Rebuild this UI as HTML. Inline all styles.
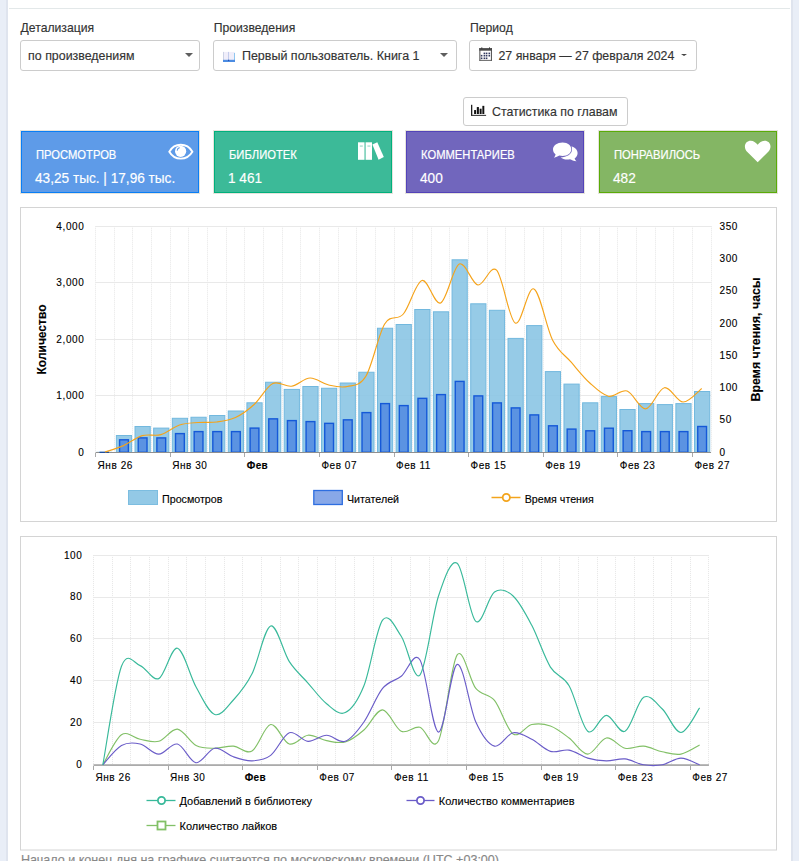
<!DOCTYPE html><html><head><meta charset="utf-8"><title>Статистика</title><style>html,body{margin:0;padding:0;background:#fff;} body{width:799px;height:861px;position:relative;overflow:hidden;font-family:"Liberation Sans", sans-serif;color:#333;-webkit-text-stroke:0.15px #333;} svg text{stroke:#000;stroke-width:0.12px;fill:#000;}.sel{position:absolute;box-sizing:border-box;border:1px solid #cccccc;border-radius:3px;background:#fff;}</style></head><body><div style="position:absolute;left:0;top:0;width:6px;height:861px;background:#e9eef7"></div><div style="position:absolute;left:6px;top:0;width:2px;height:861px;background:#dfe4ee"></div><div style="position:absolute;left:791px;top:0;width:2px;height:861px;background:#dfe4ee"></div><div style="position:absolute;left:793px;top:0;width:6px;height:861px;background:#e9eef7"></div><div style="position:absolute;left:9px;top:8px;width:781px;height:1px;background:#e3e8e9"></div><div style="position:absolute;left:20.6px;top:21.76px;font-size:12.2px;line-height:13.63px;color:#333;-webkit-text-stroke:0.15px #333;font-weight:400;white-space:nowrap;">Детализация</div><div style="position:absolute;left:213.7px;top:21.76px;font-size:12.2px;line-height:13.63px;color:#333;-webkit-text-stroke:0.15px #333;font-weight:400;white-space:nowrap;">Произведения</div><div style="position:absolute;left:470px;top:21.76px;font-size:12.2px;line-height:13.63px;color:#333;-webkit-text-stroke:0.15px #333;font-weight:400;white-space:nowrap;">Период</div><div class="sel" style="left:20px;top:40px;width:180px;height:31px"></div><div style="position:absolute;left:28.1px;top:49.88px;font-size:12.4px;line-height:13.85px;color:#333;-webkit-text-stroke:0.15px #333;font-weight:400;white-space:nowrap;">по произведениям</div><div style="position:absolute;left:184.5px;top:53.4px;width:0;height:0;border-left:4.8px solid transparent;border-right:4.8px solid transparent;border-top:4.2px solid #5e5e5e"></div><div class="sel" style="left:213px;top:40px;width:244px;height:31px"></div><svg width="14" height="12" viewBox="0 0 14 12" style="position:absolute;left:222px;top:51px">
<rect x="1" y="0.9" width="11.6" height="8.2" fill="#f0eefa"/>
<rect x="1" y="0.9" width="0.8" height="8.2" fill="#c3cbe0"/>
<rect x="6.2" y="0.9" width="0.8" height="8.2" fill="#b9c3e8"/>
<rect x="12" y="1.9" width="1" height="8" fill="#8fc6ef"/>
<rect x="1" y="8.8" width="12" height="2.2" fill="#4c8ce2"/>
<rect x="6" y="8.8" width="1.2" height="1.2" fill="#2a4cb0"/>
</svg><div style="position:absolute;left:241.9px;top:49.79px;font-size:12.5px;line-height:13.96px;color:#333;-webkit-text-stroke:0.15px #333;font-weight:400;white-space:nowrap;">Первый пользователь. Книга 1</div><div style="position:absolute;left:440.3px;top:53.4px;width:0;height:0;border-left:4.8px solid transparent;border-right:4.8px solid transparent;border-top:4.2px solid #5e5e5e"></div><div class="sel" style="left:469px;top:40px;width:228px;height:31px"></div><svg width="14" height="15" viewBox="0 0 14 15" style="position:absolute;left:479px;top:47px">
<rect x="0.3" y="1" width="12.7" height="12.7" fill="#fff"/>
<rect x="0.3" y="1" width="1.1" height="12.7" fill="#5a5a5a"/>
<rect x="11.9" y="1" width="1.1" height="12.7" fill="#5a5a5a"/>
<rect x="0.3" y="12.9" width="12.7" height="0.9" fill="#555"/>
<rect x="0.3" y="1.1" width="12.7" height="2.6" fill="#4a4a4a"/>
<rect x="2.3" y="0.4" width="1" height="1.4" fill="#333"/><rect x="10" y="0.4" width="1" height="1.4" fill="#333"/>
<rect x="4.60" y="5.60" width="1.6" height="1.6" fill="#333a60"/>
<rect x="6.80" y="5.60" width="1.6" height="1.6" fill="#333a60"/>
<rect x="9.50" y="5.60" width="1.6" height="1.6" fill="#333a60"/>
<rect x="1.80" y="7.90" width="1.6" height="1.6" fill="#333a60"/>
<rect x="4.60" y="7.90" width="1.6" height="1.6" fill="#333a60"/>
<rect x="6.80" y="7.90" width="1.6" height="1.6" fill="#333a60"/>
<rect x="9.50" y="7.90" width="1.6" height="1.6" fill="#333a60"/>
<rect x="1.80" y="10.50" width="1.6" height="1.6" fill="#333a60"/>
<rect x="4.60" y="10.50" width="1.6" height="1.6" fill="#333a60"/>
<rect x="6.80" y="10.50" width="1.6" height="1.6" fill="#333a60"/>
</svg><div style="position:absolute;left:498.5px;top:49.92px;font-size:12.35px;line-height:13.79px;color:#333;-webkit-text-stroke:0.15px #333;font-weight:400;white-space:nowrap;">27 января — 27 февраля 2024</div><div style="position:absolute;left:681.4px;top:54.2px;width:0;height:0;border-left:3.0px solid transparent;border-right:3.0px solid transparent;border-top:2.6px solid #444"></div><div class="sel" style="left:463px;top:97px;width:165px;height:29px"></div><svg width="17" height="13" viewBox="0 0 17 13" style="position:absolute;left:470px;top:104px">
<rect x="1" y="0.8" width="1.3" height="11.1" fill="#222"/>
<rect x="1" y="10.85" width="15.1" height="1.05" fill="#333"/>
<rect x="4.1" y="6.05" width="1.95" height="3.95" fill="#111"/>
<rect x="6.8" y="3.05" width="2.1" height="6.95" fill="#111"/>
<rect x="9.65" y="4.7" width="1.95" height="5.3" fill="#111"/>
<rect x="12.35" y="1.85" width="1.95" height="8.15" fill="#111"/>
</svg><div style="position:absolute;left:492px;top:106.11px;font-size:12.36px;line-height:13.81px;color:#333;-webkit-text-stroke:0.15px #333;font-weight:400;white-space:nowrap;">Статистика по главам</div><div style="position:absolute;left:21px;top:131px;width:176px;height:60px;background:#5e9be8;border:1px solid #0a7ef5;box-shadow:0 0 0 1px #e5e3dc"></div><div style="position:absolute;left:35.6px;top:148.98px;font-size:12.4px;line-height:13.85px;color:#fff;-webkit-text-stroke:0.15px #fff;font-weight:400;white-space:nowrap;transform:scaleX(0.905);transform-origin:0 0;-webkit-text-stroke:0.2px #fff">ПРОСМОТРОВ</div><div style="position:absolute;left:35.3px;top:171.05px;font-size:14.2px;line-height:15.86px;color:#fff;-webkit-text-stroke:0.15px #fff;font-weight:400;white-space:nowrap;transform:scaleX(0.961);transform-origin:0 0;-webkit-text-stroke:0.15px #fff">43,25 тыс. | 17,96 тыс.</div><svg width="28" height="18" viewBox="0 0 28 18" style="position:absolute;left:166px;top:142px">
<path d="M3.3 9.7 C6 5 9.8 2.8 14.8 2.8 C19.8 2.8 23.6 5 26.4 9.7 C23.6 14.4 19.8 16.6 14.8 16.6 C9.8 16.6 6 14.4 3.3 9.7 Z" fill="none" stroke="#fff" stroke-width="1.9"/>
<circle cx="14.6" cy="9.3" r="5.6" fill="#fff"/>
<path d="M11.2 8.6 C11.3 6.8 12.3 5.9 13.6 5.6" fill="none" stroke="#5c9ae8" stroke-width="1.1"/>
</svg><div style="position:absolute;left:214px;top:131px;width:176px;height:60px;background:#3cba98;border:1px solid #00b07c;box-shadow:0 0 0 1px #e5e3dc"></div><div style="position:absolute;left:228.6px;top:148.98px;font-size:12.4px;line-height:13.85px;color:#fff;-webkit-text-stroke:0.15px #fff;font-weight:400;white-space:nowrap;transform:scaleX(0.905);transform-origin:0 0;-webkit-text-stroke:0.2px #fff">БИБЛИОТЕК</div><div style="position:absolute;left:228.3px;top:171.05px;font-size:14.2px;line-height:15.86px;color:#fff;-webkit-text-stroke:0.15px #fff;font-weight:400;white-space:nowrap;transform:scaleX(0.961);transform-origin:0 0;-webkit-text-stroke:0.15px #fff">1 461</div><svg width="28" height="20" viewBox="0 0 28 20" style="position:absolute;left:356px;top:141px">
<rect x="2" y="1.3" width="6.5" height="17.5" fill="#fff"/>
<rect x="9.6" y="1.3" width="6.4" height="17.5" fill="#fff"/>
<path d="M16.4 3.6 L21.3 1.3 L27.8 15.9 L22.6 18.8 Z" fill="#fff"/>
<rect x="3.8" y="4.6" width="3" height="0.9" fill="#7fd0b8"/>
<rect x="11.4" y="4.6" width="3" height="0.9" fill="#7fd0b8"/>
</svg><div style="position:absolute;left:406px;top:131px;width:176px;height:60px;background:#7166bd;border:1px solid #5343b8;box-shadow:0 0 0 1px #e5e3dc"></div><div style="position:absolute;left:420.6px;top:148.98px;font-size:12.4px;line-height:13.85px;color:#fff;-webkit-text-stroke:0.15px #fff;font-weight:400;white-space:nowrap;transform:scaleX(0.905);transform-origin:0 0;-webkit-text-stroke:0.2px #fff">КОММЕНТАРИЕВ</div><div style="position:absolute;left:420.3px;top:171.05px;font-size:14.2px;line-height:15.86px;color:#fff;-webkit-text-stroke:0.15px #fff;font-weight:400;white-space:nowrap;transform:scaleX(0.961);transform-origin:0 0;-webkit-text-stroke:0.15px #fff">400</div><svg width="28" height="22" viewBox="0 0 28 22" style="position:absolute;left:551px;top:141px">
<path d="M20.5 5.2 C24.5 6.4 26.6 9 26.6 12 C26.6 14.4 25.2 16.3 23.6 17.4 C23.9 18.6 24.7 19.4 25.6 20.3 C22.8 20.1 20.5 19.1 19 18.3 C18 18.5 17.3 18.6 16.2 18.6 C13.6 18.6 11.3 17.8 9.6 16.5 C15.6 16.3 21 13.5 21 8.6 C21 7.4 20.8 6.2 20.5 5.2 Z" fill="#fff"/>
<path d="M11.6 1.6 C17 1.6 20.3 4.8 20.3 8.3 C20.3 11.8 17 15 11.6 15 C10.5 15 9.4 14.8 8.4 14.5 C6.8 15.6 5 16.3 2.9 16.8 C3.7 15.8 4.3 14.8 4.6 13.4 C2.9 12.2 2 10.4 2 8.3 C2 4.8 6.2 1.6 11.6 1.6 Z" fill="#fff"/>
</svg><div style="position:absolute;left:599px;top:131px;width:176px;height:60px;background:#84b664;border:1px solid #5aab08;box-shadow:0 0 0 1px #e5e3dc"></div><div style="position:absolute;left:613.6px;top:148.98px;font-size:12.4px;line-height:13.85px;color:#fff;-webkit-text-stroke:0.15px #fff;font-weight:400;white-space:nowrap;transform:scaleX(0.905);transform-origin:0 0;-webkit-text-stroke:0.2px #fff">ПОНРАВИЛОСЬ</div><div style="position:absolute;left:613.3px;top:171.05px;font-size:14.2px;line-height:15.86px;color:#fff;-webkit-text-stroke:0.15px #fff;font-weight:400;white-space:nowrap;transform:scaleX(0.961);transform-origin:0 0;-webkit-text-stroke:0.15px #fff">482</div><svg width="29.4" height="25.2" viewBox="0 0 28 24" style="position:absolute;left:743.3px;top:138.6px">
<path d="M14 22.2 L4.4 12.7 C2.6 10.9 1.8 9.2 1.8 7.1 C1.8 3.8 4.2 1.6 7.4 1.6 C9.9 1.6 12.3 3.3 14 5.4 C15.7 3.3 18.1 1.6 20.6 1.6 C23.8 1.6 26.2 3.8 26.2 7.1 C26.2 9.2 25.4 10.9 23.6 12.7 Z" fill="#fff"/>
</svg><svg width="799" height="861" style="position:absolute;left:0;top:0" font-family='"Liberation Sans", sans-serif'><rect x="20.5" y="207.5" width="756" height="314" fill="none" stroke="#d4d4d4" stroke-width="1"/><line x1="95.5" y1="226.3" x2="95.5" y2="452.3" stroke="#e6e6e6" stroke-width="1" stroke-dasharray="1 1"/><line x1="114.5" y1="226.3" x2="114.5" y2="452.3" stroke="#e6e6e6" stroke-width="1" stroke-dasharray="1 1"/><line x1="132.5" y1="226.3" x2="132.5" y2="452.3" stroke="#e6e6e6" stroke-width="1" stroke-dasharray="1 1"/><line x1="151.5" y1="226.3" x2="151.5" y2="452.3" stroke="#e6e6e6" stroke-width="1" stroke-dasharray="1 1"/><line x1="170.5" y1="226.3" x2="170.5" y2="452.3" stroke="#e6e6e6" stroke-width="1" stroke-dasharray="1 1"/><line x1="188.5" y1="226.3" x2="188.5" y2="452.3" stroke="#e6e6e6" stroke-width="1" stroke-dasharray="1 1"/><line x1="207.5" y1="226.3" x2="207.5" y2="452.3" stroke="#e6e6e6" stroke-width="1" stroke-dasharray="1 1"/><line x1="226.5" y1="226.3" x2="226.5" y2="452.3" stroke="#e6e6e6" stroke-width="1" stroke-dasharray="1 1"/><line x1="244.5" y1="226.3" x2="244.5" y2="452.3" stroke="#e6e6e6" stroke-width="1" stroke-dasharray="1 1"/><line x1="263.5" y1="226.3" x2="263.5" y2="452.3" stroke="#e6e6e6" stroke-width="1" stroke-dasharray="1 1"/><line x1="282.5" y1="226.3" x2="282.5" y2="452.3" stroke="#e6e6e6" stroke-width="1" stroke-dasharray="1 1"/><line x1="300.5" y1="226.3" x2="300.5" y2="452.3" stroke="#e6e6e6" stroke-width="1" stroke-dasharray="1 1"/><line x1="319.5" y1="226.3" x2="319.5" y2="452.3" stroke="#e6e6e6" stroke-width="1" stroke-dasharray="1 1"/><line x1="338.5" y1="226.3" x2="338.5" y2="452.3" stroke="#e6e6e6" stroke-width="1" stroke-dasharray="1 1"/><line x1="356.5" y1="226.3" x2="356.5" y2="452.3" stroke="#e6e6e6" stroke-width="1" stroke-dasharray="1 1"/><line x1="375.5" y1="226.3" x2="375.5" y2="452.3" stroke="#e6e6e6" stroke-width="1" stroke-dasharray="1 1"/><line x1="394.5" y1="226.3" x2="394.5" y2="452.3" stroke="#e6e6e6" stroke-width="1" stroke-dasharray="1 1"/><line x1="412.5" y1="226.3" x2="412.5" y2="452.3" stroke="#e6e6e6" stroke-width="1" stroke-dasharray="1 1"/><line x1="431.5" y1="226.3" x2="431.5" y2="452.3" stroke="#e6e6e6" stroke-width="1" stroke-dasharray="1 1"/><line x1="449.5" y1="226.3" x2="449.5" y2="452.3" stroke="#e6e6e6" stroke-width="1" stroke-dasharray="1 1"/><line x1="468.5" y1="226.3" x2="468.5" y2="452.3" stroke="#e6e6e6" stroke-width="1" stroke-dasharray="1 1"/><line x1="487.5" y1="226.3" x2="487.5" y2="452.3" stroke="#e6e6e6" stroke-width="1" stroke-dasharray="1 1"/><line x1="505.5" y1="226.3" x2="505.5" y2="452.3" stroke="#e6e6e6" stroke-width="1" stroke-dasharray="1 1"/><line x1="524.5" y1="226.3" x2="524.5" y2="452.3" stroke="#e6e6e6" stroke-width="1" stroke-dasharray="1 1"/><line x1="543.5" y1="226.3" x2="543.5" y2="452.3" stroke="#e6e6e6" stroke-width="1" stroke-dasharray="1 1"/><line x1="561.5" y1="226.3" x2="561.5" y2="452.3" stroke="#e6e6e6" stroke-width="1" stroke-dasharray="1 1"/><line x1="580.5" y1="226.3" x2="580.5" y2="452.3" stroke="#e6e6e6" stroke-width="1" stroke-dasharray="1 1"/><line x1="599.5" y1="226.3" x2="599.5" y2="452.3" stroke="#e6e6e6" stroke-width="1" stroke-dasharray="1 1"/><line x1="617.5" y1="226.3" x2="617.5" y2="452.3" stroke="#e6e6e6" stroke-width="1" stroke-dasharray="1 1"/><line x1="636.5" y1="226.3" x2="636.5" y2="452.3" stroke="#e6e6e6" stroke-width="1" stroke-dasharray="1 1"/><line x1="655.5" y1="226.3" x2="655.5" y2="452.3" stroke="#e6e6e6" stroke-width="1" stroke-dasharray="1 1"/><line x1="673.5" y1="226.3" x2="673.5" y2="452.3" stroke="#e6e6e6" stroke-width="1" stroke-dasharray="1 1"/><line x1="692.5" y1="226.3" x2="692.5" y2="452.3" stroke="#e6e6e6" stroke-width="1" stroke-dasharray="1 1"/><line x1="711.5" y1="226.3" x2="711.5" y2="452.3" stroke="#e6e6e6" stroke-width="1" stroke-dasharray="1 1"/><line x1="95.6" y1="452.5" x2="711.05" y2="452.5" stroke="#e9e9e9" stroke-width="1"/><line x1="95.6" y1="395.5" x2="711.05" y2="395.5" stroke="#e9e9e9" stroke-width="1"/><line x1="95.6" y1="339.5" x2="711.05" y2="339.5" stroke="#e9e9e9" stroke-width="1"/><line x1="95.6" y1="282.5" x2="711.05" y2="282.5" stroke="#e9e9e9" stroke-width="1"/><line x1="95.6" y1="226.5" x2="711.05" y2="226.5" stroke="#e9e9e9" stroke-width="1"/><rect x="96.5" y="451.6" width="15.5" height="1.4" fill="#b9dcef"/><rect x="116.38" y="435.5" width="15.2" height="16.8" fill="#8bc5e4" fill-opacity="0.9" stroke="#72b8de" stroke-width="1"/><rect x="119.58" y="439.8" width="8.8" height="12.5" fill="#5b93e2" stroke="#1559d8" stroke-width="1.4"/><rect x="135.02" y="426.5" width="15.2" height="25.8" fill="#8bc5e4" fill-opacity="0.9" stroke="#72b8de" stroke-width="1"/><rect x="138.22" y="437.9" width="8.8" height="14.4" fill="#5b93e2" stroke="#1559d8" stroke-width="1.4"/><rect x="153.67" y="428.1" width="15.2" height="24.2" fill="#8bc5e4" fill-opacity="0.9" stroke="#72b8de" stroke-width="1"/><rect x="156.87" y="437.9" width="8.8" height="14.4" fill="#5b93e2" stroke="#1559d8" stroke-width="1.4"/><rect x="172.32" y="418.3" width="15.2" height="34" fill="#8bc5e4" fill-opacity="0.9" stroke="#72b8de" stroke-width="1"/><rect x="175.52" y="433.6" width="8.8" height="18.7" fill="#5b93e2" stroke="#1559d8" stroke-width="1.4"/><rect x="190.97" y="417.25" width="15.2" height="35.05" fill="#8bc5e4" fill-opacity="0.9" stroke="#72b8de" stroke-width="1"/><rect x="194.17" y="431.6" width="8.8" height="20.7" fill="#5b93e2" stroke="#1559d8" stroke-width="1.4"/><rect x="209.62" y="415.5" width="15.2" height="36.8" fill="#8bc5e4" fill-opacity="0.9" stroke="#72b8de" stroke-width="1"/><rect x="212.82" y="431.6" width="8.8" height="20.7" fill="#5b93e2" stroke="#1559d8" stroke-width="1.4"/><rect x="228.27" y="411" width="15.2" height="41.3" fill="#8bc5e4" fill-opacity="0.9" stroke="#72b8de" stroke-width="1"/><rect x="231.47" y="431.6" width="8.8" height="20.7" fill="#5b93e2" stroke="#1559d8" stroke-width="1.4"/><rect x="246.92" y="402.8" width="15.2" height="49.5" fill="#8bc5e4" fill-opacity="0.9" stroke="#72b8de" stroke-width="1"/><rect x="250.12" y="428.1" width="8.8" height="24.2" fill="#5b93e2" stroke="#1559d8" stroke-width="1.4"/><rect x="265.57" y="382.25" width="15.2" height="70.05" fill="#8bc5e4" fill-opacity="0.9" stroke="#72b8de" stroke-width="1"/><rect x="268.77" y="418.85" width="8.8" height="33.45" fill="#5b93e2" stroke="#1559d8" stroke-width="1.4"/><rect x="284.22" y="389.4" width="15.2" height="62.9" fill="#8bc5e4" fill-opacity="0.9" stroke="#72b8de" stroke-width="1"/><rect x="287.43" y="420.6" width="8.8" height="31.7" fill="#5b93e2" stroke="#1559d8" stroke-width="1.4"/><rect x="302.87" y="386.5" width="15.2" height="65.8" fill="#8bc5e4" fill-opacity="0.9" stroke="#72b8de" stroke-width="1"/><rect x="306.07" y="421.6" width="8.8" height="30.7" fill="#5b93e2" stroke="#1559d8" stroke-width="1.4"/><rect x="321.52" y="388.25" width="15.2" height="64.05" fill="#8bc5e4" fill-opacity="0.9" stroke="#72b8de" stroke-width="1"/><rect x="324.72" y="423.35" width="8.8" height="28.95" fill="#5b93e2" stroke="#1559d8" stroke-width="1.4"/><rect x="340.17" y="383" width="15.2" height="69.3" fill="#8bc5e4" fill-opacity="0.9" stroke="#72b8de" stroke-width="1"/><rect x="343.37" y="419.85" width="8.8" height="32.45" fill="#5b93e2" stroke="#1559d8" stroke-width="1.4"/><rect x="358.82" y="372.25" width="15.2" height="80.05" fill="#8bc5e4" fill-opacity="0.9" stroke="#72b8de" stroke-width="1"/><rect x="362.02" y="412.6" width="8.8" height="39.7" fill="#5b93e2" stroke="#1559d8" stroke-width="1.4"/><rect x="377.47" y="328.25" width="15.2" height="124.05" fill="#8bc5e4" fill-opacity="0.9" stroke="#72b8de" stroke-width="1"/><rect x="380.68" y="403.6" width="8.8" height="48.7" fill="#5b93e2" stroke="#1559d8" stroke-width="1.4"/><rect x="396.12" y="324.5" width="15.2" height="127.8" fill="#8bc5e4" fill-opacity="0.9" stroke="#72b8de" stroke-width="1"/><rect x="399.32" y="405.6" width="8.8" height="46.7" fill="#5b93e2" stroke="#1559d8" stroke-width="1.4"/><rect x="414.77" y="309.5" width="15.2" height="142.8" fill="#8bc5e4" fill-opacity="0.9" stroke="#72b8de" stroke-width="1"/><rect x="417.97" y="398.35" width="8.8" height="53.95" fill="#5b93e2" stroke="#1559d8" stroke-width="1.4"/><rect x="433.42" y="311.8" width="15.2" height="140.5" fill="#8bc5e4" fill-opacity="0.9" stroke="#72b8de" stroke-width="1"/><rect x="436.62" y="394.6" width="8.8" height="57.7" fill="#5b93e2" stroke="#1559d8" stroke-width="1.4"/><rect x="452.07" y="259.8" width="15.2" height="192.5" fill="#8bc5e4" fill-opacity="0.9" stroke="#72b8de" stroke-width="1"/><rect x="455.27" y="381.4" width="8.8" height="70.9" fill="#5b93e2" stroke="#1559d8" stroke-width="1.4"/><rect x="470.72" y="303.8" width="15.2" height="148.5" fill="#8bc5e4" fill-opacity="0.9" stroke="#72b8de" stroke-width="1"/><rect x="473.93" y="395.9" width="8.8" height="56.4" fill="#5b93e2" stroke="#1559d8" stroke-width="1.4"/><rect x="489.37" y="310.3" width="15.2" height="142" fill="#8bc5e4" fill-opacity="0.9" stroke="#72b8de" stroke-width="1"/><rect x="492.57" y="402.9" width="8.8" height="49.4" fill="#5b93e2" stroke="#1559d8" stroke-width="1.4"/><rect x="508.02" y="338.4" width="15.2" height="113.9" fill="#8bc5e4" fill-opacity="0.9" stroke="#72b8de" stroke-width="1"/><rect x="511.23" y="407.9" width="8.8" height="44.4" fill="#5b93e2" stroke="#1559d8" stroke-width="1.4"/><rect x="526.67" y="325.6" width="15.2" height="126.7" fill="#8bc5e4" fill-opacity="0.9" stroke="#72b8de" stroke-width="1"/><rect x="529.88" y="414.9" width="8.8" height="37.4" fill="#5b93e2" stroke="#1559d8" stroke-width="1.4"/><rect x="545.32" y="371.6" width="15.2" height="80.7" fill="#8bc5e4" fill-opacity="0.9" stroke="#72b8de" stroke-width="1"/><rect x="548.52" y="425.8" width="8.8" height="26.5" fill="#5b93e2" stroke="#1559d8" stroke-width="1.4"/><rect x="563.97" y="384.1" width="15.2" height="68.2" fill="#8bc5e4" fill-opacity="0.9" stroke="#72b8de" stroke-width="1"/><rect x="567.17" y="429.1" width="8.8" height="23.2" fill="#5b93e2" stroke="#1559d8" stroke-width="1.4"/><rect x="582.62" y="402.8" width="15.2" height="49.5" fill="#8bc5e4" fill-opacity="0.9" stroke="#72b8de" stroke-width="1"/><rect x="585.83" y="430.8" width="8.8" height="21.5" fill="#5b93e2" stroke="#1559d8" stroke-width="1.4"/><rect x="601.27" y="396.6" width="15.2" height="55.7" fill="#8bc5e4" fill-opacity="0.9" stroke="#72b8de" stroke-width="1"/><rect x="604.48" y="428.2" width="8.8" height="24.1" fill="#5b93e2" stroke="#1559d8" stroke-width="1.4"/><rect x="619.92" y="409.5" width="15.2" height="42.8" fill="#8bc5e4" fill-opacity="0.9" stroke="#72b8de" stroke-width="1"/><rect x="623.12" y="430.7" width="8.8" height="21.6" fill="#5b93e2" stroke="#1559d8" stroke-width="1.4"/><rect x="638.57" y="403.6" width="15.2" height="48.7" fill="#8bc5e4" fill-opacity="0.9" stroke="#72b8de" stroke-width="1"/><rect x="641.77" y="431.6" width="8.8" height="20.7" fill="#5b93e2" stroke="#1559d8" stroke-width="1.4"/><rect x="657.23" y="404.6" width="15.2" height="47.7" fill="#8bc5e4" fill-opacity="0.9" stroke="#72b8de" stroke-width="1"/><rect x="660.43" y="431.6" width="8.8" height="20.7" fill="#5b93e2" stroke="#1559d8" stroke-width="1.4"/><rect x="675.88" y="403.6" width="15.2" height="48.7" fill="#8bc5e4" fill-opacity="0.9" stroke="#72b8de" stroke-width="1"/><rect x="679.08" y="431.6" width="8.8" height="20.7" fill="#5b93e2" stroke="#1559d8" stroke-width="1.4"/><rect x="694.52" y="391.5" width="15.2" height="60.8" fill="#8bc5e4" fill-opacity="0.9" stroke="#72b8de" stroke-width="1"/><rect x="697.73" y="426.5" width="8.8" height="25.8" fill="#5b93e2" stroke="#1559d8" stroke-width="1.4"/><line x1="95.6" y1="452.5" x2="711.05" y2="452.5" stroke="#8f8f8f" stroke-width="1.2"/><line x1="95.5" y1="453" x2="95.5" y2="457" stroke="#aaaaaa" stroke-width="1"/><line x1="170.5" y1="453" x2="170.5" y2="457" stroke="#aaaaaa" stroke-width="1"/><line x1="244.5" y1="453" x2="244.5" y2="457" stroke="#aaaaaa" stroke-width="1"/><line x1="319.5" y1="453" x2="319.5" y2="457" stroke="#aaaaaa" stroke-width="1"/><line x1="394.5" y1="453" x2="394.5" y2="457" stroke="#aaaaaa" stroke-width="1"/><line x1="468.5" y1="453" x2="468.5" y2="457" stroke="#aaaaaa" stroke-width="1"/><line x1="543.5" y1="453" x2="543.5" y2="457" stroke="#aaaaaa" stroke-width="1"/><line x1="617.5" y1="453" x2="617.5" y2="457" stroke="#aaaaaa" stroke-width="1"/><line x1="692.5" y1="453" x2="692.5" y2="457" stroke="#aaaaaa" stroke-width="1"/><rect x="99.5" y="451.7" width="9.5" height="1.3" fill="#1f4f9e"/><path d="M104.92 452 C108.03 450.93 117.36 448.33 123.57 445.6 C129.79 442.87 136.01 437.43 142.22 435.6 C148.44 433.77 154.66 436.37 160.88 434.6 C167.09 432.83 173.31 427.02 179.52 425 C185.74 422.98 191.96 423 198.17 422.5 C204.39 422 210.61 422.83 216.82 422 C223.04 421.17 229.26 420.42 235.47 417.5 C241.69 414.58 247.91 410.17 254.12 404.5 C260.34 398.83 266.56 386.55 272.77 383.5 C278.99 380.45 285.21 387.12 291.42 386.2 C297.64 385.28 303.86 378.2 310.07 378 C316.29 377.8 322.51 383.58 328.72 385 C334.94 386.42 341.16 388 347.38 386.5 C353.59 385 359.81 386.42 366.02 376 C372.24 365.58 378.46 334.33 384.67 324 C390.89 313.67 397.11 321.25 403.32 314 C409.54 306.75 415.76 282.33 421.98 280.5 C428.19 278.67 434.41 305.75 440.62 303 C446.84 300.25 453.06 267 459.27 264 C465.49 261 471.71 283.97 477.92 285 C484.14 286.03 490.36 263.85 496.57 270.2 C502.79 276.55 509.01 319.98 515.22 323.1 C521.44 326.22 527.66 286.1 533.88 288.9 C540.09 291.7 546.31 327.68 552.52 339.9 C558.74 352.12 564.96 355.02 571.17 362.2 C577.39 369.38 583.61 377.33 589.82 383 C596.04 388.67 602.26 394.87 608.48 396.2 C614.69 397.53 620.91 388.9 627.12 391 C633.34 393.1 639.56 409.35 645.77 408.8 C651.99 408.25 658.21 388.83 664.42 387.7 C670.64 386.57 676.86 401.87 683.07 402 C689.29 402.13 698.62 390.75 701.73 388.5" fill="none" stroke="#f5a31a" stroke-width="1.15"/><text x="84.4" y="455.7" font-size="10" letter-spacing="0.6" text-anchor="end">0</text><text x="84.4" y="399.2" font-size="10" letter-spacing="0.6" text-anchor="end">1,000</text><text x="84.4" y="342.7" font-size="10" letter-spacing="0.6" text-anchor="end">2,000</text><text x="84.4" y="286.2" font-size="10" letter-spacing="0.6" text-anchor="end">3,000</text><text x="84.4" y="229.7" font-size="10" letter-spacing="0.6" text-anchor="end">4,000</text><text x="719.5" y="455.7" font-size="10" letter-spacing="0.6">0</text><text x="719.5" y="423.41" font-size="10" letter-spacing="0.6">50</text><text x="719.5" y="391.13" font-size="10" letter-spacing="0.6">100</text><text x="719.5" y="358.84" font-size="10" letter-spacing="0.6">150</text><text x="719.5" y="326.56" font-size="10" letter-spacing="0.6">200</text><text x="719.5" y="294.27" font-size="10" letter-spacing="0.6">250</text><text x="719.5" y="261.99" font-size="10" letter-spacing="0.6">300</text><text x="719.5" y="229.7" font-size="10" letter-spacing="0.6">350</text><text x="97.6" y="468.9" font-size="10" letter-spacing="0.55" >Янв 26</text><text x="172.2" y="468.9" font-size="10" letter-spacing="0.55" >Янв 30</text><text x="246.8" y="468.9" font-size="10" letter-spacing="0.3" font-weight="700">Фев</text><text x="321.4" y="468.9" font-size="10" letter-spacing="0.55" >Фев 07</text><text x="396" y="468.9" font-size="10" letter-spacing="0.55" >Фев 11</text><text x="470.6" y="468.9" font-size="10" letter-spacing="0.55" >Фев 15</text><text x="545.2" y="468.9" font-size="10" letter-spacing="0.55" >Фев 19</text><text x="619.8" y="468.9" font-size="10" letter-spacing="0.55" >Фев 23</text><text x="694.4" y="468.9" font-size="10" letter-spacing="0.55" >Фев 27</text><text transform="translate(45.6 339.5) rotate(-90)" font-size="12" font-weight="700" text-anchor="middle">Количество</text><text transform="translate(760.2 339.5) rotate(-90)" font-size="12.4" font-weight="700" text-anchor="middle">Время чтения, часы</text><rect x="128.5" y="490.5" width="29" height="14" fill="#93c9e6" stroke="#7cbde0"/><text x="162" y="503" font-size="10.7">Просмотров</text><rect x="313.8" y="490.5" width="28.5" height="14" fill="#88a8e8" stroke="#2e6ee0" stroke-width="1.3"/><text x="347" y="503" font-size="10.7">Читателей</text><line x1="491.5" y1="497.5" x2="520.5" y2="497.5" stroke="#f3a41c" stroke-width="1.5"/><circle cx="506.3" cy="497.5" r="3.6" fill="#fff" stroke="#f3a41c" stroke-width="1.8"/><text x="524.7" y="503" font-size="10.7">Время чтения</text><rect x="20.5" y="536.5" width="756" height="313.5" fill="none" stroke="#d4d4d4" stroke-width="1"/><line x1="93.5" y1="555.1" x2="93.5" y2="764.8" stroke="#e6e6e6" stroke-width="1" stroke-dasharray="1 1"/><line x1="112.5" y1="555.1" x2="112.5" y2="764.8" stroke="#e6e6e6" stroke-width="1" stroke-dasharray="1 1"/><line x1="130.5" y1="555.1" x2="130.5" y2="764.8" stroke="#e6e6e6" stroke-width="1" stroke-dasharray="1 1"/><line x1="149.5" y1="555.1" x2="149.5" y2="764.8" stroke="#e6e6e6" stroke-width="1" stroke-dasharray="1 1"/><line x1="168.5" y1="555.1" x2="168.5" y2="764.8" stroke="#e6e6e6" stroke-width="1" stroke-dasharray="1 1"/><line x1="186.5" y1="555.1" x2="186.5" y2="764.8" stroke="#e6e6e6" stroke-width="1" stroke-dasharray="1 1"/><line x1="205.5" y1="555.1" x2="205.5" y2="764.8" stroke="#e6e6e6" stroke-width="1" stroke-dasharray="1 1"/><line x1="224.5" y1="555.1" x2="224.5" y2="764.8" stroke="#e6e6e6" stroke-width="1" stroke-dasharray="1 1"/><line x1="242.5" y1="555.1" x2="242.5" y2="764.8" stroke="#e6e6e6" stroke-width="1" stroke-dasharray="1 1"/><line x1="261.5" y1="555.1" x2="261.5" y2="764.8" stroke="#e6e6e6" stroke-width="1" stroke-dasharray="1 1"/><line x1="280.5" y1="555.1" x2="280.5" y2="764.8" stroke="#e6e6e6" stroke-width="1" stroke-dasharray="1 1"/><line x1="298.5" y1="555.1" x2="298.5" y2="764.8" stroke="#e6e6e6" stroke-width="1" stroke-dasharray="1 1"/><line x1="317.5" y1="555.1" x2="317.5" y2="764.8" stroke="#e6e6e6" stroke-width="1" stroke-dasharray="1 1"/><line x1="335.5" y1="555.1" x2="335.5" y2="764.8" stroke="#e6e6e6" stroke-width="1" stroke-dasharray="1 1"/><line x1="354.5" y1="555.1" x2="354.5" y2="764.8" stroke="#e6e6e6" stroke-width="1" stroke-dasharray="1 1"/><line x1="373.5" y1="555.1" x2="373.5" y2="764.8" stroke="#e6e6e6" stroke-width="1" stroke-dasharray="1 1"/><line x1="391.5" y1="555.1" x2="391.5" y2="764.8" stroke="#e6e6e6" stroke-width="1" stroke-dasharray="1 1"/><line x1="410.5" y1="555.1" x2="410.5" y2="764.8" stroke="#e6e6e6" stroke-width="1" stroke-dasharray="1 1"/><line x1="429.5" y1="555.1" x2="429.5" y2="764.8" stroke="#e6e6e6" stroke-width="1" stroke-dasharray="1 1"/><line x1="447.5" y1="555.1" x2="447.5" y2="764.8" stroke="#e6e6e6" stroke-width="1" stroke-dasharray="1 1"/><line x1="466.5" y1="555.1" x2="466.5" y2="764.8" stroke="#e6e6e6" stroke-width="1" stroke-dasharray="1 1"/><line x1="485.5" y1="555.1" x2="485.5" y2="764.8" stroke="#e6e6e6" stroke-width="1" stroke-dasharray="1 1"/><line x1="503.5" y1="555.1" x2="503.5" y2="764.8" stroke="#e6e6e6" stroke-width="1" stroke-dasharray="1 1"/><line x1="522.5" y1="555.1" x2="522.5" y2="764.8" stroke="#e6e6e6" stroke-width="1" stroke-dasharray="1 1"/><line x1="541.5" y1="555.1" x2="541.5" y2="764.8" stroke="#e6e6e6" stroke-width="1" stroke-dasharray="1 1"/><line x1="559.5" y1="555.1" x2="559.5" y2="764.8" stroke="#e6e6e6" stroke-width="1" stroke-dasharray="1 1"/><line x1="578.5" y1="555.1" x2="578.5" y2="764.8" stroke="#e6e6e6" stroke-width="1" stroke-dasharray="1 1"/><line x1="597.5" y1="555.1" x2="597.5" y2="764.8" stroke="#e6e6e6" stroke-width="1" stroke-dasharray="1 1"/><line x1="615.5" y1="555.1" x2="615.5" y2="764.8" stroke="#e6e6e6" stroke-width="1" stroke-dasharray="1 1"/><line x1="634.5" y1="555.1" x2="634.5" y2="764.8" stroke="#e6e6e6" stroke-width="1" stroke-dasharray="1 1"/><line x1="653.5" y1="555.1" x2="653.5" y2="764.8" stroke="#e6e6e6" stroke-width="1" stroke-dasharray="1 1"/><line x1="671.5" y1="555.1" x2="671.5" y2="764.8" stroke="#e6e6e6" stroke-width="1" stroke-dasharray="1 1"/><line x1="690.5" y1="555.1" x2="690.5" y2="764.8" stroke="#e6e6e6" stroke-width="1" stroke-dasharray="1 1"/><line x1="708.5" y1="555.1" x2="708.5" y2="764.8" stroke="#e6e6e6" stroke-width="1" stroke-dasharray="1 1"/><line x1="93.5" y1="764.5" x2="708.95" y2="764.5" stroke="#e9e9e9" stroke-width="1"/><line x1="93.5" y1="722.5" x2="708.95" y2="722.5" stroke="#e9e9e9" stroke-width="1"/><line x1="93.5" y1="680.5" x2="708.95" y2="680.5" stroke="#e9e9e9" stroke-width="1"/><line x1="93.5" y1="638.5" x2="708.95" y2="638.5" stroke="#e9e9e9" stroke-width="1"/><line x1="93.5" y1="597.5" x2="708.95" y2="597.5" stroke="#e9e9e9" stroke-width="1"/><line x1="93.5" y1="555.5" x2="708.95" y2="555.5" stroke="#e9e9e9" stroke-width="1"/><line x1="93.5" y1="765.1" x2="708.95" y2="765.1" stroke="#ababab" stroke-width="1.8"/><line x1="93.5" y1="766" x2="93.5" y2="770" stroke="#a8a8a8" stroke-width="1"/><line x1="168.5" y1="766" x2="168.5" y2="770" stroke="#a8a8a8" stroke-width="1"/><line x1="242.5" y1="766" x2="242.5" y2="770" stroke="#a8a8a8" stroke-width="1"/><line x1="317.5" y1="766" x2="317.5" y2="770" stroke="#a8a8a8" stroke-width="1"/><line x1="391.5" y1="766" x2="391.5" y2="770" stroke="#a8a8a8" stroke-width="1"/><line x1="466.5" y1="766" x2="466.5" y2="770" stroke="#a8a8a8" stroke-width="1"/><line x1="541.5" y1="766" x2="541.5" y2="770" stroke="#a8a8a8" stroke-width="1"/><line x1="615.5" y1="766" x2="615.5" y2="770" stroke="#a8a8a8" stroke-width="1"/><line x1="690.5" y1="766" x2="690.5" y2="770" stroke="#a8a8a8" stroke-width="1"/><path d="M102.83 764.8 C105.93 759.8 115.26 739.08 121.47 734.81 C127.69 730.55 133.91 738.13 140.12 739.22 C146.34 740.3 152.56 742.99 158.77 741.31 C164.99 739.64 171.21 728.45 177.43 729.15 C183.64 729.85 189.86 742.33 196.07 745.51 C202.29 748.69 208.51 748.13 214.72 748.23 C220.94 748.34 227.16 745.68 233.38 746.14 C239.59 746.59 245.81 754.56 252.02 750.96 C258.24 747.36 264.46 725.69 270.67 724.54 C276.89 723.38 283.11 742.26 289.32 744.04 C295.54 745.82 301.76 735.79 307.98 735.23 C314.19 734.67 320.41 739.57 326.62 740.68 C332.84 741.8 339.06 743.73 345.27 741.94 C351.49 740.16 357.71 735.34 363.92 729.99 C370.14 724.64 376.36 709.65 382.57 709.86 C388.79 710.07 395.01 728.35 401.22 731.25 C407.44 734.15 413.66 725.69 419.88 727.26 C426.09 728.84 432.31 752.74 438.52 740.68 C444.74 728.63 450.96 663.62 457.17 654.92 C463.39 646.21 469.61 680.89 475.82 688.47 C482.04 696.05 488.26 692.84 494.47 700.42 C500.69 708.01 506.91 729.95 513.12 733.97 C519.34 737.99 525.56 725.87 531.77 724.54 C537.99 723.21 544.21 723.77 550.42 726.01 C556.64 728.24 562.86 733.28 569.08 737.96 C575.29 742.64 581.51 754.11 587.72 754.11 C593.94 754.11 600.16 738.94 606.38 737.96 C612.59 736.98 618.81 746.87 625.02 748.23 C631.24 749.6 637.46 745.54 643.67 746.14 C649.89 746.73 656.11 750.47 662.32 751.8 C668.54 753.13 674.76 755.22 680.97 754.11 C687.19 752.99 696.52 746.59 699.62 745.09" fill="none" stroke="#82c067" stroke-width="1.15"/><path d="M102.83 764.8 C105.93 761.58 115.26 748.97 121.47 745.51 C127.69 742.05 133.91 742.61 140.12 744.04 C146.34 745.47 152.56 754.11 158.77 754.11 C164.99 754.11 171.21 742.61 177.43 744.04 C183.64 745.47 189.86 762 196.07 762.7 C202.29 763.4 208.51 749.21 214.72 748.23 C220.94 747.26 227.16 754.73 233.38 756.83 C239.59 758.93 245.81 761.06 252.02 760.82 C258.24 760.57 264.46 760.05 270.67 755.36 C276.89 750.68 283.11 735.06 289.32 732.72 C295.54 730.37 301.76 740.89 307.98 741.31 C314.19 741.73 320.41 735.23 326.62 735.23 C332.84 735.23 339.06 743.52 345.27 741.31 C351.49 739.11 357.71 730.83 363.92 722.02 C370.14 713.21 376.36 696.09 382.57 688.47 C388.79 680.85 395.01 681.09 401.22 676.31 C407.44 671.52 413.66 650.44 419.88 659.74 C426.09 669.04 432.31 731.32 438.52 732.09 C444.74 732.86 450.96 666.03 457.17 664.35 C463.39 662.68 469.61 708.39 475.82 722.02 C482.04 735.65 488.26 744.35 494.47 746.14 C500.69 747.92 506.91 733.87 513.12 732.72 C519.34 731.56 525.56 736.11 531.77 739.22 C537.99 742.33 544.21 749.56 550.42 751.38 C556.64 753.2 562.86 749 569.08 750.12 C575.29 751.24 581.51 756.31 587.72 758.09 C593.94 759.87 600.16 760.68 606.38 760.82 C612.59 760.96 618.81 758.26 625.02 758.93 C631.24 759.59 637.46 763.82 643.67 764.8 C649.89 765.78 656.11 765.92 662.32 764.8 C668.54 763.68 674.76 758.09 680.97 758.09 C687.19 758.09 696.52 763.68 699.62 764.8" fill="none" stroke="#6a5cc8" stroke-width="1.15"/><path d="M102.83 764.8 C105.93 748.37 115.26 682.77 121.47 666.24 C127.69 649.71 133.91 663.55 140.12 665.61 C146.34 667.67 152.56 681.51 158.77 678.61 C164.99 675.71 171.21 646.81 177.43 648.21 C183.64 649.6 189.86 675.96 196.07 687 C202.29 698.05 208.51 712.31 214.72 714.47 C220.94 716.64 227.16 706.78 233.38 700 C239.59 693.22 245.81 686.13 252.02 673.79 C258.24 661.45 264.46 628.01 270.67 625.98 C276.89 623.95 283.11 652.12 289.32 661.63 C295.54 671.13 301.76 675.99 307.98 683.02 C314.19 690.04 320.41 698.85 326.62 703.78 C332.84 708.71 339.06 715.59 345.27 712.58 C351.49 709.58 357.71 701.16 363.92 685.74 C370.14 670.33 376.36 628.36 382.57 620.11 C388.79 611.86 395.01 627.1 401.22 636.25 C407.44 645.41 413.66 681.76 419.88 675.05 C426.09 668.34 432.31 614.62 438.52 595.99 C444.74 577.36 450.96 559.05 457.17 563.28 C463.39 567.51 469.61 616.58 475.82 621.37 C482.04 626.15 488.26 596.24 494.47 592.01 C500.69 587.78 506.91 590.43 513.12 595.99 C519.34 601.55 525.56 613.5 531.77 625.35 C537.99 637.2 544.21 657.01 550.42 667.08 C556.64 677.15 562.86 675.05 569.08 685.74 C575.29 696.44 581.51 726.32 587.72 731.25 C593.94 736.18 600.16 715.31 606.38 715.31 C612.59 715.31 618.81 734.25 625.02 731.25 C631.24 728.24 637.46 700.98 643.67 697.28 C649.89 693.57 656.11 703.15 662.32 709.02 C668.54 714.89 674.76 732.68 680.97 732.51 C687.19 732.33 696.52 712.06 699.62 707.97" fill="none" stroke="#38b99a" stroke-width="1.15"/><text x="82.4" y="768.2" font-size="10" letter-spacing="0.6" text-anchor="end">0</text><text x="82.4" y="726.26" font-size="10" letter-spacing="0.6" text-anchor="end">20</text><text x="82.4" y="684.32" font-size="10" letter-spacing="0.6" text-anchor="end">40</text><text x="82.4" y="642.38" font-size="10" letter-spacing="0.6" text-anchor="end">60</text><text x="82.4" y="600.44" font-size="10" letter-spacing="0.6" text-anchor="end">80</text><text x="82.4" y="558.5" font-size="10" letter-spacing="0.6" text-anchor="end">100</text><text x="95.5" y="780.8" font-size="10" letter-spacing="0.55" >Янв 26</text><text x="170.1" y="780.8" font-size="10" letter-spacing="0.55" >Янв 30</text><text x="244.7" y="780.8" font-size="10" letter-spacing="0.3" font-weight="700">Фев</text><text x="319.3" y="780.8" font-size="10" letter-spacing="0.55" >Фев 07</text><text x="393.9" y="780.8" font-size="10" letter-spacing="0.55" >Фев 11</text><text x="468.5" y="780.8" font-size="10" letter-spacing="0.55" >Фев 15</text><text x="543.1" y="780.8" font-size="10" letter-spacing="0.55" >Фев 19</text><text x="617.7" y="780.8" font-size="10" letter-spacing="0.55" >Фев 23</text><text x="692.3" y="780.8" font-size="10" letter-spacing="0.55" >Фев 27</text><line x1="146.5" y1="800.5" x2="175.5" y2="800.5" stroke="#38b99a" stroke-width="1.3"/><circle cx="161.5" cy="800.5" r="3.6" fill="#fff" stroke="#38b99a" stroke-width="1.8"/><text x="179.5" y="805.4" font-size="11">Добавлений в библиотеку</text><line x1="406.5" y1="800.5" x2="434.5" y2="800.5" stroke="#6a5cc8" stroke-width="1.3"/><circle cx="420.5" cy="800.5" r="3.6" fill="#fff" stroke="#6a5cc8" stroke-width="1.8"/><text x="438.8" y="805.4" font-size="11">Количество комментариев</text><line x1="146.5" y1="825.5" x2="175.5" y2="825.5" stroke="#82c067" stroke-width="1.3"/><rect x="157.5" y="821.5" width="8" height="8" fill="#fff" stroke="#82c067" stroke-width="1.8"/><text x="179.5" y="830.4" font-size="11">Количество лайков</text></svg><div style="position:absolute;left:21px;top:853.44px;font-size:12.55px;line-height:14.02px;color:#888;-webkit-text-stroke:0.15px #888;font-weight:400;white-space:nowrap;">Начало и конец дня на графике считаются по московскому времени (UTC +03:00)</div></body></html>
